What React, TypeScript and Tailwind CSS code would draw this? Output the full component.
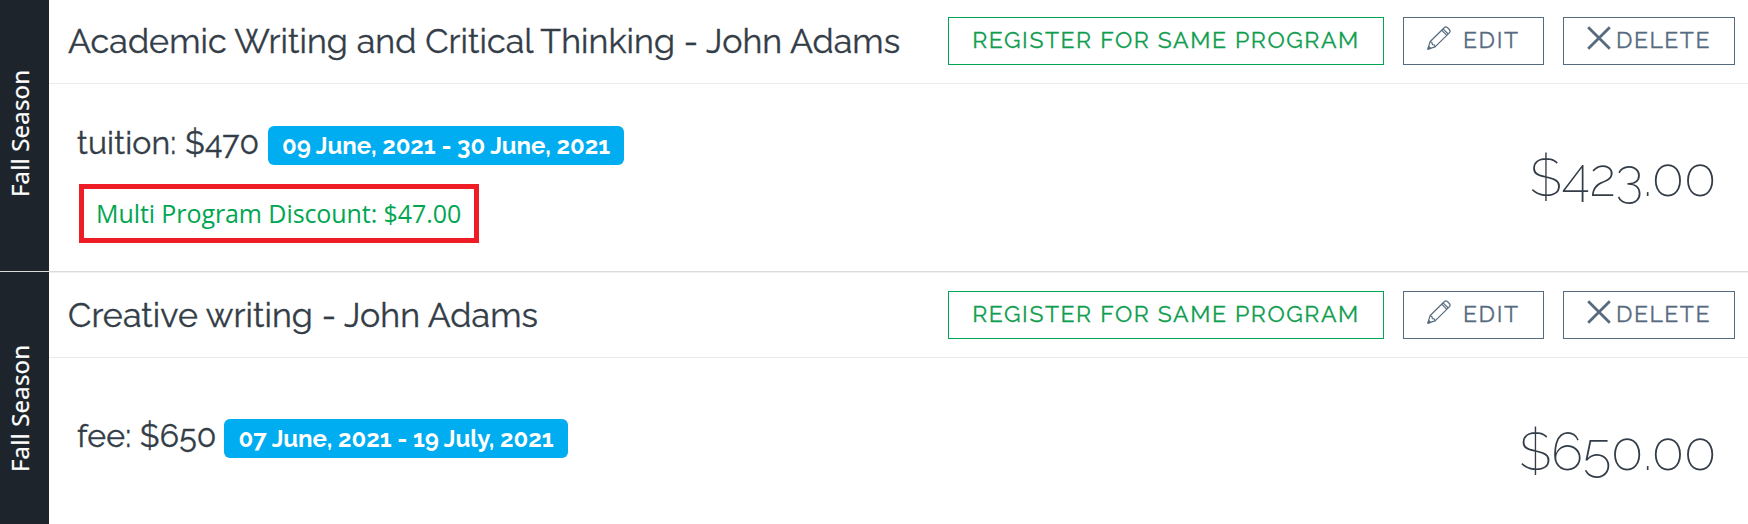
import { clsx } from "clsx";

type Program = {
  title: string;
  season: string;
  label: string;
  dates: string;
  discount?: string;
  total: string;
};

const programs: Program[] = [
  {
    title: "Academic Writing and Critical Thinking - John Adams",
    season: "Fall Season",
    label: "tuition: $470",
    dates: "09 June, 2021 - 30 June, 2021",
    discount: "Multi Program Discount: $47.00",
    total: "$423.00",
  },
  {
    title: "Creative writing - John Adams",
    season: "Fall Season",
    label: "fee: $650",
    dates: "07 June, 2021 - 19 July, 2021",
    total: "$650.00",
  },
];

const PencilIcon = () => (
  <svg width="24" height="24" viewBox="0 0 24 24" fill="none" stroke="currentColor" strokeWidth="1.2" strokeLinejoin="round">
    <path d="M0.9 23.1 3 15.8 17.2 1.7q1.6-1.5 3.3 0l1.8 1.8q1.6 1.7 0 3.3L8.1 20.9z" />
    <path d="M3 15.8 4.9 16.5 5.4 18.6 7.5 19 8.1 20.9M14.6 4.2l5.2 5.2M16 2.8l5.2 5.2" />
    <path d="M0.9 23.1 1.7 20.4 3.6 22.3z" fill="currentColor" />
  </svg>
);

const CrossIcon = () => (
  <svg width="24" height="24" viewBox="0 0 24 24" fill="none" stroke="currentColor" strokeWidth="2.8">
    <path d="M1.2 1.2 22.8 22.8M22.8 1.2 1.2 22.8" />
  </svg>
);

const ProgramRow = ({ program, first }: { program: Program; first: boolean }) => {
  return (
    <div className={clsx("flex", first ? "h-[272px] border-b border-[#dcdcdc]" : "h-[252px]")}>
      {/* Season strip */}
      <div className={clsx("w-[49px] shrink-0 bg-[#1d242b] pl-[5px]", first ? "pt-[70px]" : "pt-[73px]")}>
        <span className="block h-[127px] w-[30px] rotate-180 [writing-mode:vertical-rl] leading-[30px] whitespace-nowrap text-white text-[24px] tracking-[0.15px] [-webkit-text-stroke:0.2px] font-['Noto_Sans',sans-serif]">
          {program.season}
        </span>
      </div>

      <div className={clsx("flex-1 flex flex-col", !first && "shadow-[inset_0_1px_0_#f0f0f0]")}>
        {/* Header */}
        <div
          className={clsx(
            "flex items-start justify-between border-b border-[#ebebeb] pl-[19px] pr-[13px]",
            first ? "h-[84px] pt-[17px]" : "h-[86px] pt-[19px]"
          )}
        >
          <h2 className="text-[34px] leading-[48px] tracking-[0.075px] [-webkit-text-stroke:0.35px] whitespace-nowrap text-[#333d47]">
            {program.title}
          </h2>
          <div className="flex gap-[19px] text-[23px] [-webkit-text-stroke:0.3px]">
            <button className="w-[436px] h-12 pb-[2px] border border-[#00a651] text-[#0f9d4f] whitespace-nowrap tracking-[1.58px]">
              REGISTER FOR SAME PROGRAM
            </button>
            <button className="w-[141px] h-12 pb-[2px] border border-[#566b80] text-[#566b80] flex items-center pl-[23px] gap-[12px] tracking-[1.6px]">
              <span className="-mt-1"><PencilIcon /></span>
              EDIT
            </button>
            <button className="w-[172px] h-12 pb-[2px] border border-[#566b80] text-[#566b80] flex items-center pl-[23px] gap-[5px] tracking-[1.5px]">
              <span className="-mt-1"><CrossIcon /></span>
              DELETE
            </button>
          </div>
        </div>

        {/* Fees */}
        <div className="flex justify-between pl-[28px] pr-[32px]">
          <div className={first ? "pt-[42px]" : "pt-[61px]"}>
            <div className="flex items-center gap-[9px] h-[39px]">
              <span
                className={clsx(
                  "-mt-1.5 text-[32px] leading-[39px] tracking-[0.18px] [-webkit-text-stroke:0.35px] whitespace-nowrap text-[#333d47] oldstyle-nums",
                  first ? "w-[182px]" : "w-[138px]"
                )}
              >
                {program.label}
              </span>
              <span
                className={clsx(
                  "h-[39px] leading-[39px] rounded-md bg-[#00adf0] text-center text-white text-[24px] font-bold tracking-[-0.05px] whitespace-nowrap oldstyle-nums",
                  first ? "w-[356px]" : "w-[344px]"
                )}
              >
                {program.dates}
              </span>
            </div>
            {program.discount && (
              <div className="mt-[19px] ml-[2px] w-[400px] h-[59px] border-[5px] border-[#ee1c25] leading-[49px] pl-[12px] text-[25px] tracking-[-0.08px] whitespace-nowrap text-[#00a651] font-['Open_Sans',sans-serif]">
                {program.discount}
              </div>
            )}
          </div>
          <div className="pt-[63px] text-[53px] leading-[60px] font-extralight tracking-[-0.2px] text-[#333d47] oldstyle-nums">
            {program.total}
          </div>
        </div>
      </div>
    </div>
  );
};

const App = () => {
  return (
    <div className="w-full h-[524px] overflow-hidden bg-white font-['Raleway','Lato',sans-serif]">
      {programs.map((program, i) => (
        <ProgramRow key={program.title} program={program} first={i === 0} />
      ))}
    </div>
  );
};

export default App;
